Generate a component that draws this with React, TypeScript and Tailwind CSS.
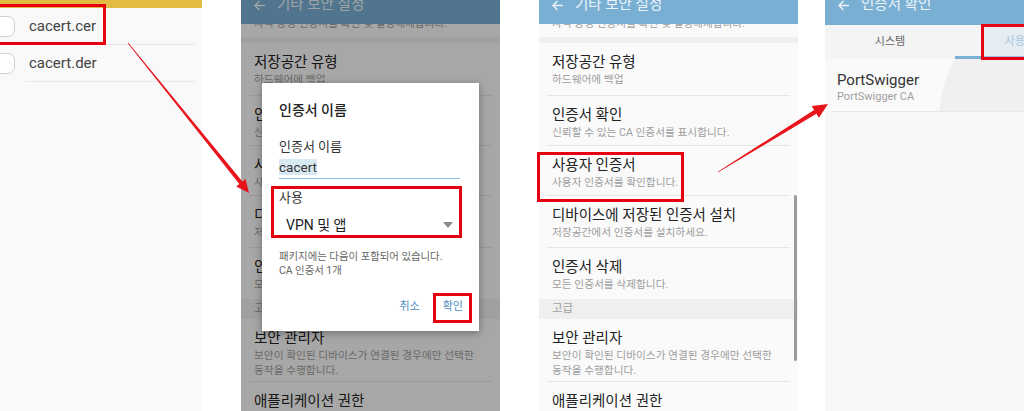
import React from "react";

type Item = { t: string; s: string[]; h: string; divider: boolean };

const items: Item[] = [
  { t: "저장공간 유형", s: ["하드웨어에 백업"], h: "h-[54px]", divider: true },
  { t: "인증서 확인", s: ["신뢰할 수 있는 CA 인증서를 표시합니다."], h: "h-[52px]", divider: true },
  { t: "사용자 인증서", s: ["사용자 인증서를 확인합니다."], h: "h-[52px]", divider: true },
  { t: "디바이스에 저장된 인증서 설치", s: ["저장공간에서 인증서를 설치하세요."], h: "h-[53px]", divider: true },
  { t: "인증서 삭제", s: ["모든 인증서를 삭제합니다."], h: "h-[53px]", divider: false },
];

function BackArrow() {
  return (
    <svg width="12" height="11" viewBox="0 0 12 11" className="mt-[0px] shrink-0">
      <path d="M11 5.5H1.5M5.5 1L1 5.5L5.5 10" fill="none" stroke="currentColor" strokeWidth="1.5" />
    </svg>
  );
}

function Header({ title }: { title: string }) {
  return (
    <div className="h-[25px] bg-[#7aafd4] flex items-start pl-[13px] text-white/85 overflow-hidden">
      <BackArrow />
      <span className="ml-[11px] text-[14.5px] leading-[14px] mt-[-2px] whitespace-nowrap">{title}</span>
    </div>
  );
}

function Row({ it }: { it: Item }) {
  return (
    <div className={`${it.h} mx-[8px] px-[5px] pt-[10px] ${it.divider ? "border-b border-[#e5e5e5]" : ""}`}>
      <div className="text-[14.5px] leading-[19px] text-[#222] whitespace-nowrap">{it.t}</div>
      {it.s.map((s) => (
        <div key={s} className="text-[10.7px] leading-[15px] text-[#9d9d9d] whitespace-nowrap">
          {s}
        </div>
      ))}
    </div>
  );
}

function SettingsList() {
  return (
    <div className="h-full bg-[#fafafa] flex flex-col overflow-hidden">
      <Header title="기타 보안 설정" />
      <div className="h-[13px] overflow-hidden px-[13px]">
        <div className="text-[10.7px] leading-[12px] mt-[-6px] text-[#9d9d9d] whitespace-nowrap">
          자격 증명 인증서를 확인 및 설정해제합니다.
        </div>
      </div>
      <div className="h-[7px] bg-[#efefef]" />
      {items.map((it) => (
        <Row key={it.t} it={it} />
      ))}
      <div className="h-[21px] bg-[#efefef] flex items-center px-[13px] text-[11.5px] text-[#a0a0a0]">고급</div>
      <div className="h-[65px] mx-[8px] px-[5px] pt-[10px] border-b border-[#e5e5e5]">
        <div className="text-[14.5px] leading-[19px] text-[#222]">보안 관리자</div>
        <div className="text-[10.7px] leading-[15px] text-[#9d9d9d] whitespace-nowrap">보안이 확인된 디바이스가 연결된 경우에만 선택한</div>
        <div className="text-[10.7px] leading-[15px] text-[#9d9d9d]">동작을 수행합니다.</div>
      </div>
      <div className="mx-[8px] px-[5px] pt-[10px]">
        <div className="text-[14.5px] leading-[19px] text-[#222]">애플리케이션 권한</div>
      </div>
    </div>
  );
}

function arrowPoints(x1: number, y1: number, x2: number, y2: number, w1: number, w2: number, hl: number, hw: number) {
  const dx = x2 - x1;
  const dy = y2 - y1;
  const L = Math.hypot(dx, dy);
  const ux = dx / L;
  const uy = dy / L;
  const px = -uy;
  const py = ux;
  const bx = x2 - ux * hl;
  const by = y2 - uy * hl;
  const pts = [
    [x1 + (px * w1) / 2, y1 + (py * w1) / 2],
    [bx + (px * w2) / 2, by + (py * w2) / 2],
    [bx + px * hw, by + py * hw],
    [x2, y2],
    [bx - px * hw, by - py * hw],
    [bx - (px * w2) / 2, by - (py * w2) / 2],
    [x1 - (px * w1) / 2, y1 - (py * w1) / 2],
  ];
  return pts.map((p) => `${p[0].toFixed(1)},${p[1].toFixed(1)}`).join(" ");
}

function RedBox({ className }: { className: string }) {
  return <div className={`absolute border-[3px] border-[#e60012] ${className}`} />;
}

export default function App() {
  return (
    <div className="relative w-[1024px] h-[411px] overflow-hidden bg-white font-[Roboto,'Noto_Sans_CJK_KR',sans-serif]">
      <div className="flex h-full">
        {/* Panel 1: file list */}
        <div className="w-[202px] shrink-0 h-full bg-[#f9f9f9] flex flex-col">
          <div className="h-[8px] bg-[#e2bc42]" />
          {["cacert.cer", "cacert.der"].map((f) => (
            <div key={f} className="flex items-center h-[37px]">
              <div className="ml-[-9px] w-[24px] h-[21px] rounded-[7px] border border-[#d0d0d0] bg-white shrink-0" />
              <div className="ml-[10px] mr-[7px] flex-1 h-full border-b border-[#e8e8e8] flex items-center pl-[4px] text-[15px] text-[#444]">
                {f}
              </div>
            </div>
          ))}
        </div>

        {/* Panel 2: dialog over list */}
        <div className="ml-[39px] w-[259px] shrink-0 h-full relative">
          <SettingsList />
          <div className="absolute inset-0 bg-black/[0.33]" />
          <div className="absolute left-[21px] top-[83px] w-[217px] h-[248px] bg-white shadow-[0_2px_8px_rgba(0,0,0,0.35)] flex flex-col pl-[17px] pr-[19px] pt-[18px]">
            <div className="text-[14px] leading-[18px] font-medium text-[#222]">인증서 이름</div>
            <div className="mt-[20px] text-[13px] leading-[16px] text-[#333]">인증서 이름</div>
            <div className="h-[24px] border-b border-[#8dbde3]">
              <span className="text-[13.5px] leading-[20px] text-[#333] bg-[#d9e9f4]">cacert</span>
            </div>
            <div className="mt-[11px] text-[13px] leading-[16px] text-[#333]">사용</div>
            <div className="mt-[9px] h-[20px] flex items-center justify-between pl-[7px] pr-[7px]">
              <span className="text-[14px] leading-[20px] text-[#222]">VPN 및 앱</span>
              <svg width="10" height="6" viewBox="0 0 10 6">
                <path d="M0 0H10L5 6Z" fill="#8a8a8a" />
              </svg>
            </div>
            <div className="mt-[15px] text-[10.4px] leading-[14px] text-[#666] whitespace-nowrap">패키지에는 다음이 포함되어 있습니다.</div>
            <div className="text-[10.4px] leading-[14px] text-[#666]">CA 인증서 1개</div>
            <div className="mt-[21px] flex justify-end gap-[23px] text-[11px] leading-[16px] text-[#4f8bc2]">
              <span>취소</span>
              <span className="mr-[-3px]">확인</span>
            </div>
          </div>
        </div>

        {/* Panel 3: list */}
        <div className="ml-[39px] w-[259px] shrink-0 h-full relative">
          <SettingsList />
          <div className="absolute left-[255px] top-[195px] w-[3px] h-[166px] bg-[#9b9b9b] rounded-full" />
        </div>

        {/* Panel 4: certificates */}
        <div className="ml-[27px] w-[260px] shrink-0 h-full bg-[#f8f8f8] flex flex-col">
          <Header title="인증서 확인" />
          <div className="h-[34px] bg-[#f4f4f4] flex">
            <div className="w-[130px] flex items-center justify-center text-[11px] text-[#666]">시스템</div>
            <div className="w-[130px] flex items-center justify-center text-[11px] text-[#8fb4d0] border-b-[3px] border-[#7aafd4] pt-[3px]">
              사용자
            </div>
          </div>
          <div className="relative h-[53px] overflow-hidden bg-[#fafafa]">
            <div className="absolute left-[114px] top-[-60px] w-[240px] h-[240px] rounded-full bg-[#f0f0f0]" />
            <div className="relative h-full mx-[7px] px-[5px] pt-[11px] border-b border-[#e8e8e8]">
              <div className="text-[15px] leading-[20px] text-[#333]">PortSwigger</div>
              <div className="text-[11px] leading-[14px] text-[#a0a0a0]">PortSwigger CA</div>
            </div>
          </div>
        </div>
      </div>

      {/* red highlight boxes */}
      <RedBox className="left-[-3px] top-[4px] w-[109px] h-[41px]" />
      <RedBox className="left-[271px] top-[186px] w-[191px] h-[52px]" />
      <RedBox className="left-[433px] top-[293px] w-[39px] h-[30px]" />
      <RedBox className="left-[537px] top-[152px] w-[147px] h-[50px]" />
      <div className="absolute left-[981px] top-[24px] w-[50px] h-[36px] border-[3px] border-[#e60012] bg-[#cfe2ef]/40" />

      {/* arrows */}
      <svg className="absolute inset-0 pointer-events-none" width="1024" height="411" viewBox="0 0 1024 411">
        <polygon points={arrowPoints(128, 43, 249, 193, 0.8, 4, 13, 6)} fill="#e8141c" />
        <polygon points={arrowPoints(718, 172, 828, 104, 0.8, 4.5, 15, 7)} fill="#e8141c" />
      </svg>
    </div>
  );
}
